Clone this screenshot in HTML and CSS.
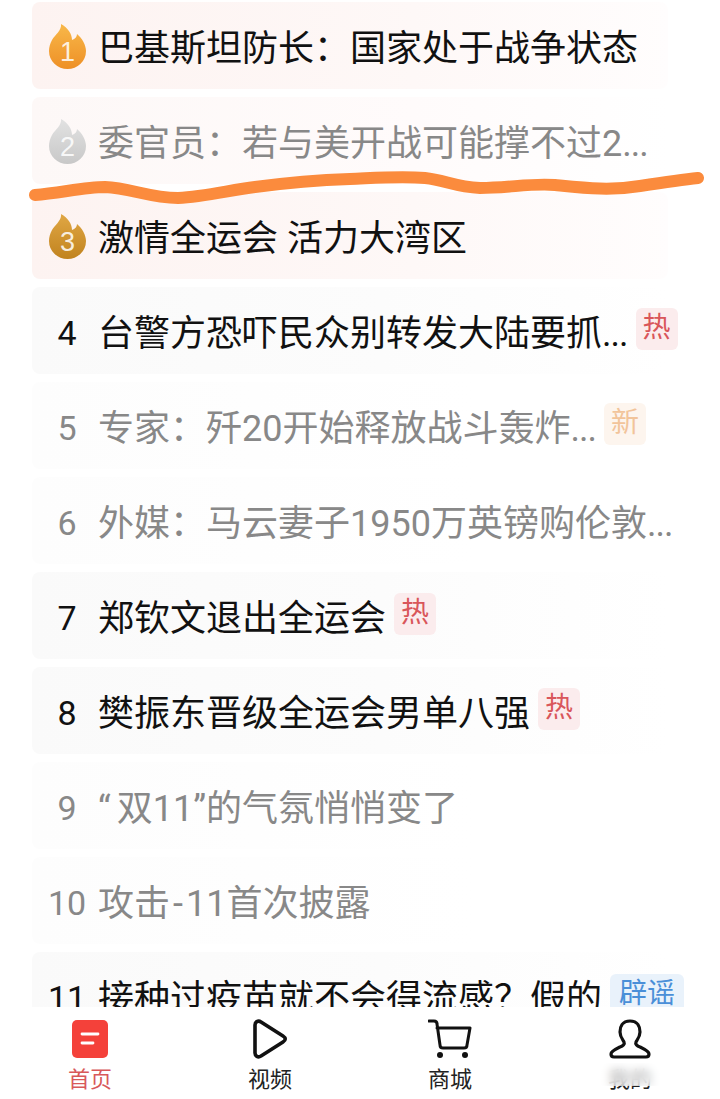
FILE: index.html
```html
<!DOCTYPE html>
<html lang="zh-CN">
<head>
  <meta charset="UTF-8">
  <title>热榜</title>
  <link rel="stylesheet" href="styles.css">
</head>
<body>
  <main class="hot-list">
    <div class="row top">
      <span class="rank">
        <svg class="flame" viewBox="0 0 37 45" width="37" height="45">
          <defs>
            <linearGradient id="gold" x1="0" y1="0" x2="0" y2="1"><stop offset="0" stop-color="#f8b84a"/><stop offset="1" stop-color="#ee9026"/></linearGradient>
            <linearGradient id="silver" x1="0" y1="0" x2="0" y2="1"><stop offset="0" stop-color="#e2e2e2"/><stop offset="1" stop-color="#c8c8c8"/></linearGradient>
            <linearGradient id="bronze" x1="0" y1="0" x2="0" y2="1"><stop offset="0" stop-color="#e0a744"/><stop offset="1" stop-color="#c1831f"/></linearGradient>
          </defs>
          <path fill="url(#gold)" d="M12 0C13 6 6 11 3 16C1 20 0 23 0 27A18.5 18 0 0 0 37 27C37 21 33 14 28 10C28 13 26 15 23 16C23 10 19 4 12 0Z"/>
          <text x="18.5" y="37" class="flame-num">1</text>
        </svg>
      </span>
      <span class="title">巴基斯坦防长&#xFF1A;国家处于战争状态</span>
    </div>
    <div class="row top read">
      <span class="rank">
        <svg class="flame" viewBox="0 0 37 45" width="37" height="45">
          <path fill="url(#silver)" d="M12 0C13 6 6 11 3 16C1 20 0 23 0 27A18.5 18 0 0 0 37 27C37 21 33 14 28 10C28 13 26 15 23 16C23 10 19 4 12 0Z"/>
          <text x="18.5" y="37" class="flame-num">2</text>
        </svg>
      </span>
      <span class="title">委官员&#xFF1A;若与美开战可能撑不过2<span class="dots">...</span></span>
    </div>
    <div class="row top">
      <span class="rank">
        <svg class="flame" viewBox="0 0 37 45" width="37" height="45">
          <path fill="url(#bronze)" d="M12 0C13 6 6 11 3 16C1 20 0 23 0 27A18.5 18 0 0 0 37 27C37 21 33 14 28 10C28 13 26 15 23 16C23 10 19 4 12 0Z"/>
          <text x="18.5" y="37" class="flame-num">3</text>
        </svg>
      </span>
      <span class="title">激情全运会 活力大湾区</span>
    </div>
    <div class="row">
      <span class="rank">4</span>
      <span class="title">台警方恐吓民众别转发大陆要抓<span class="dots">...</span></span>
      <span class="tag hot">热</span>
    </div>
    <div class="row read">
      <span class="rank">5</span>
      <span class="title">专家&#xFF1A;歼20开始释放战斗轰炸<span class="dots">...</span></span>
      <span class="tag new">新</span>
    </div>
    <div class="row read">
      <span class="rank">6</span>
      <span class="title">外媒&#xFF1A;马云妻子1950万英镑购伦敦<span class="dots">...</span></span>
    </div>
    <div class="row">
      <span class="rank">7</span>
      <span class="title">郑钦文退出全运会</span>
      <span class="tag hot">热</span>
    </div>
    <div class="row">
      <span class="rank">8</span>
      <span class="title">樊振东晋级全运会男单八强</span>
      <span class="tag hot">热</span>
    </div>
    <div class="row read">
      <span class="rank">9</span>
      <span class="title"><span class="quote">“</span>双11”的气氛悄悄变了</span>
    </div>
    <div class="row read">
      <span class="rank">10</span>
      <span class="title">攻击<span class="dash">-</span>11首次披露</span>
    </div>
    <div class="row">
      <span class="rank">11</span>
      <span class="title">接种过疫苗就不会得流感&#xFF1F;假的</span>
      <span class="tag rumor">辟谣</span>
    </div>
  </main>

  <nav class="tabbar">
    <a class="tab active">
      <svg viewBox="0 0 36 38" width="36" height="38">
        <rect width="36" height="38" rx="5" fill="#f4413a"/>
        <path d="M10 14H26M10 23H21" stroke="#fff" stroke-width="2.8" stroke-linecap="round" fill="none"/>
      </svg>
      <span>首页</span>
    </a>
    <a class="tab">
      <svg viewBox="0 0 36 40" width="36" height="40">
        <path d="M3 6C3 3 6 1 9 3L31 17C34 19 34 21 31 23L9 37C6 39 3 37 3 34Z" fill="none" stroke="#111" stroke-width="3.6" stroke-linejoin="round"/>
      </svg>
      <span>视频</span>
    </a>
    <a class="tab">
      <svg viewBox="0 0 44 40" width="44" height="40">
        <path d="M1 2H6C8 2 9 3 9 5L12 26C12 28 13 29 15 29H36C38 29 39 28 39 26L42 9H9" fill="none" stroke="#111" stroke-width="3" stroke-linejoin="round" stroke-linecap="round"/>
        <circle cx="12" cy="36" r="3" fill="#111"/>
        <circle cx="37" cy="36" r="3" fill="#111"/>
      </svg>
      <span>商城</span>
    </a>
    <a class="tab">
      <svg viewBox="0 0 42 40" width="42" height="40">
        <path d="M21 2C13 2 11 8 11 13C11 18 14 21 15 23C16 25 14 27 11 28C7 30 2 32 2 35C2 37 3 38 5 38H37C39 38 40 37 40 35C40 32 35 30 31 28C28 27 26 25 27 23C28 21 31 18 31 13C31 8 29 2 21 2Z" fill="none" stroke="#111" stroke-width="3.2" stroke-linejoin="round"/>
      </svg>
      <span>我的</span>
    </a>
  </nav>

  <svg class="scribble" viewBox="0 0 720 210" width="720" height="210">
    <path d="M35 195C60 193 85 187 105 187C130 188 150 198 178 198C205 197 230 190 255 187C285 183 320 180 350 179C375 178 400 176 425 178C445 180 455 187 480 188C510 188 530 183 555 185C585 188 610 191 640 186C660 183 680 180 698 178" fill="none" stroke="#fb8b3d" stroke-width="12" stroke-linecap="round" stroke-linejoin="round"/>
  </svg>
  <div class="smudge"></div>
</body>
</html>
```

FILE: styles.css
```css
* {
  box-sizing: border-box;
}
html, body {
  height: 100%;
}
body {
  margin: 0;
  position: relative;
  display: flex;
  flex-direction: column;
  overflow: hidden;
  background: #fff;
  color: #111;
  font-family: Roboto, "Noto Sans CJK SC", sans-serif;
}

.hot-list {
  flex: 1;
  min-height: 0;
  overflow: hidden;
  display: flex;
  flex-direction: column;
  gap: 8px;
  padding: 2px 0 0 32px;
}
.row {
  flex: none;
  width: 636px;
  height: 87px;
  display: flex;
  align-items: center;
  padding-left: 15px;
  border-radius: 8px;
  background: linear-gradient(90deg, #fafafa, #fcfcfc 55%, #fff);
  white-space: nowrap;
}
.row.top {
  background: linear-gradient(90deg, #fdf3f1, #fef8f7 60%, #fffdfd);
}
.row.read {
  color: #888;
  background: linear-gradient(90deg, #fdfdfd, #fff 70%);
}
.row.top.read {
  background: linear-gradient(90deg, #fdf8f7, #fffbfb 60%, #fff);
}

.rank {
  flex: none;
  width: 40px;
  margin-right: 11px;
  padding-top: 4px;
  text-align: center;
  font-size: 34px;
  line-height: 1;
  display: flex;
  justify-content: center;
}
.row.top .rank {
  padding-top: 0;
}
.title {
  padding-top: 6px;
  font-size: 36px;
  line-height: 44px;
}
.dots {
  letter-spacing: -1px;
}
.quote {
  margin-right: 6px;
}
.dash {
  margin: 0 3px;
}
.flame {
  display: block;
  margin-top: 2px;
}
.flame-num {
  fill: #fff;
  fill-opacity: 0.85;
  font-size: 27px;
  text-anchor: middle;
  font-family: "Liberation Sans", sans-serif;
}

.tag {
  flex: none;
  height: 42px;
  margin-left: 8px;
  margin-top: -4px;
  padding: 0 7px;
  border-radius: 6px;
  font-size: 28px;
  line-height: 40px;
  text-align: center;
}
.tag.hot {
  background: #fbeced;
  color: #d9565a;
}
.tag.new {
  background: #fdf5ee;
  color: #f2c49a;
}
.tag.rumor {
  background: #e9f2fb;
  color: #4a8fd8;
  height: 46px;
  margin-top: 3px;
  padding: 0 9px;
}

.tabbar {
  flex: none;
  height: 92px;
  display: grid;
  grid-template-columns: repeat(4, 1fr);
  background: #fff;
  padding-top: 12px;
}
.tab {
  display: flex;
  flex-direction: column;
  align-items: center;
  font-size: 22px;
  line-height: 26px;
  color: #222;
}
.tab svg {
  display: block;
  height: 40px;
  margin-bottom: 8px;
}
.tab.active {
  color: #d8595a;
}

.scribble {
  position: absolute;
  top: 0;
  left: 0;
  pointer-events: none;
}
.smudge {
  position: absolute;
  left: 568px;
  top: 1063px;
  width: 136px;
  height: 23px;
  background: rgba(255, 255, 255, 0.6);
  backdrop-filter: blur(4px);
}
```
